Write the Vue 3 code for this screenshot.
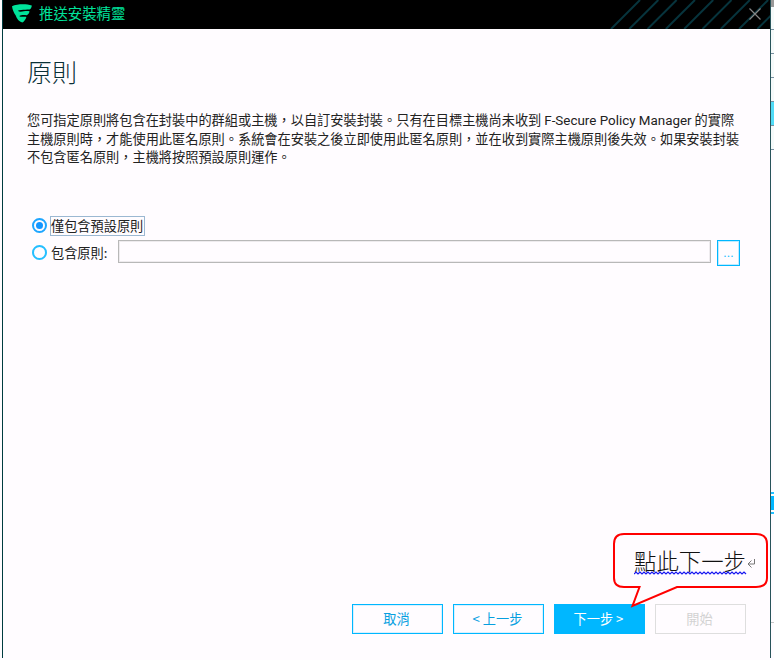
<script setup>
import { ref } from 'vue'

const choice = ref('default')
const lines = [
  { text: '您可指定原則將包含在封裝中的群組或主機，以自訂安裝封裝。只有在目標主機尚未收到 ', latin: 'F-Secure Policy Manager', rest: ' 的實際' },
  { text: '主機原則時，才能使用此匿名原則。系統會在安裝之後立即使用此匿名原則，並在收到實際主機原則後失效。如果安裝封裝' },
  { text: '不包含匿名原則，主機將按照預設原則運作。' }
]
const stripes = Array.from({ length: 9 }, (_, i) => 4 + i * 18.3)
const wave = 'M0 3' + 'l2-2 2 2'.repeat(28)
</script>

<template>
  <div class="screen">
    <section class="window">
      <header class="bar">
        <svg class="logo" width="20" height="19" viewBox="0 0 20 19">
          <path d="M0 2.200C5 0 14-.4 19.800 1.500C19.600 3.500 18.800 5 17.600 5.600C13 6 9 5.200 5.800 6.800C8 8.800 13 6.500 17.500 7.300C17.200 9.300 16.200 10.700 14.800 11.200C11.500 11 9.300 10.800 7.300 12C9 13.600 12 12.200 14.400 12.900C13.800 15.200 12 17.500 10.300 18.600C7 17.800 4.800 14.500 3.600 11.200C2 9 .5 6 0 2.200Z" />
        </svg>
        <span class="title">推送安裝精靈</span>
        <svg class="stripes" width="163" height="29" viewBox="0 0 163 29">
          <path v-for="x in stripes" :key="x" :d="`M${x} 29l29-29`" />
        </svg>
        <svg class="close" width="12" height="12" viewBox="0 0 12 12"><path d="M.5.500l11 11M11.500.500l-11 11" /></svg>
      </header>
      <main class="body">
        <h1>原則</h1>
        <div class="desc">
          <div v-for="(l, i) in lines" :key="i">{{ l.text }}<span v-if="l.latin" class="latin">{{ l.latin }}</span>{{ l.rest }}</div>
        </div>
        <div class="option first" @click="choice = 'default'">
          <span class="radio" :class="{ on: choice === 'default' }"></span>
          <span class="label focus">僅包含預設原則</span>
        </div>
        <div class="option second" @click="choice = 'policy'">
          <span class="radio" :class="{ on: choice === 'policy' }"></span>
          <span class="label plain">包含原則:</span>
          <span class="field"></span>
          <button class="browse">...</button>
        </div>
      </main>
      <footer class="actions">
        <button>取消</button>
        <button>&lt; 上一步</button>
        <button class="primary">下一步 &gt;</button>
        <button class="disabled">開始</button>
      </footer>
    </section>
    <aside class="behind">
      <i class="grey"></i><i class="row r1"></i><i class="row"></i><i class="row"></i><i class="row"></i>
      <i class="row sel"></i><i class="row"></i><i class="gap"></i><i class="mark"></i><i class="rest"></i>
    </aside>
    <div class="callout">
      <svg width="158" height="77" viewBox="0 0 158 77">
        <path class="bubble" d="M12 2H144Q155 2 155 12V46Q155 55 144 55H65L20.500 74L27.500 55H12Q2 55 2 46V12Q2 2 12 2Z" />
        <path class="return" d="M142.500 27v5h-6M139.500 28.500l-3.500 3.500 3.500 3.500" />
      </svg>
      <span class="note">點此下一步</span>
      <svg class="wave" width="113" height="4" viewBox="0 0 113 4"><path :d="wave" /></svg>
    </div>
  </div>
</template>

<style>
body { background: #fffcff; overflow: hidden; }
</style>

<style scoped>
* { box-sizing: border-box; }
.screen { position: relative; display: flex; width: 774px; height: 660px; padding-left: 2px; font: 13.2px/18px "Noto Sans CJK TC", sans-serif; color: #222; background: #fffcff; }
.window { width: 769px; height: 658px; display: flex; flex-direction: column; border-left: 1px solid #003c40; border-right: 1px solid #28545a; }
.bar { position: relative; height: 29px; flex: none; display: flex; align-items: flex-start; padding: 4px 9px 0; background: #000; }
.logo { fill: #00e39b; flex: none; }
.title { margin: -1px 0 0 7px; font-size: 14.4px; line-height: 20px; color: #00e39b; }
.stripes { position: absolute; right: 0; top: 0; fill: none; stroke: #07343d; stroke-width: 2; }
.close { position: absolute; right: 9px; top: 8px; fill: none; stroke: #858585; stroke-width: 1.200; }
.body { flex: 1; padding: 26px 24px 0; }
h1 { margin: 0; font-size: 25px; line-height: 32px; font-weight: 300; color: #0a3037; }
.desc { margin-top: 24px; white-space: pre; }
.latin { font-family: Roboto, sans-serif; font-size: 13.400px; }
.option { display: flex; align-items: center; padding-left: 5px; }
.first { height: 20px; margin-top: 50px; }
.second { height: 27px; margin-top: 3px; }
.radio { width: 15px; height: 15px; flex: none; border: 2px solid #25bfff; border-radius: 50%; display: flex; margin-right: -1px; }
.first .radio { margin-top: -1px; }
.radio.on { border-color: #1ea6ff; }
.radio.on::after { content: ""; width: 7px; height: 7px; margin: auto; border-radius: 50%; background: #1496ff; }
.label { white-space: nowrap; }
.focus { height: 20px; width: 95px; margin-left: 4px; border: 1px solid #9bb8d2; }
.plain { width: 67px; margin-left: 5px; }
.field { width: 593px; height: 23px; margin-top: -3px; border: 1px solid #b8b8b8; box-shadow: inset 0 0 0 1px #eeebee; }
button { font: inherit; border: 1px solid #00b7ff; background: #fffcff; color: #079fdf; padding: 0; }
.browse { width: 23px; height: 26px; margin-left: 6px; font-family: Roboto, sans-serif; color: #25bfff; box-shadow: inset 0 0 0 1px rgba(0, 183, 255, 0.25); }
.actions { display: flex; gap: 10px; margin: 0 24px 24px auto; }
.actions button { width: 91px; height: 30px; padding-right: 2px; box-shadow: inset 0 0 0 1px rgba(0, 183, 255, 0.15); }
.actions .primary { background: #00b7ff; color: #fff; }
.actions .disabled { border-color: #dedede; color: #d2d2d2; box-shadow: none; }
.behind { width: 3px; height: 660px; display: flex; flex-direction: column; background: #fffcff; }
.behind i { flex: none; }
.grey { height: 7px; background: #999; }
.row { height: 24px; border-bottom: 1px solid #7890a0; background: #f5fafa; }
.r1 { height: 23px; }
.sel { background: #51dcf7; }
.gap { height: 342px; }
.mark { height: 22px; border: solid #22bfff; border-width: 2px 0; background: linear-gradient(#fff 2px, #00b7ff 2px 16px, #fff 16px); }
.rest { height: 109px; border-bottom: 1px solid #c8c8c8; }
.callout { position: absolute; left: 612px; top: 532px; width: 158px; height: 77px; }
.callout svg { display: block; }
.bubble { fill: #fffcff; stroke: #f00; stroke-width: 2; }
.return { fill: none; stroke: #777; stroke-width: 1; }
.note { position: absolute; left: 22px; top: 13px; font: 300 22.400px/30px "Noto Sans CJK TC", sans-serif; color: #111; white-space: nowrap; }
.callout .wave { position: absolute; left: 22px; top: 39px; fill: none; stroke: #1717f0; stroke-width: 1.200; }
</style>
